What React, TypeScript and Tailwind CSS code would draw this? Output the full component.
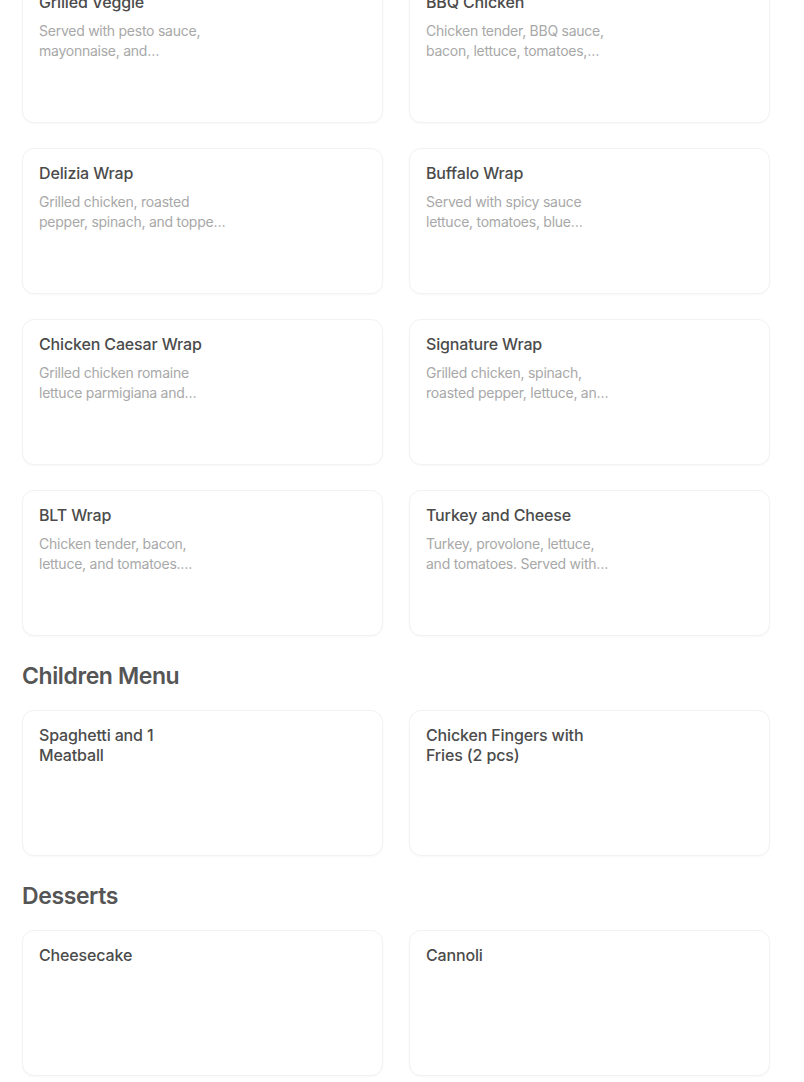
type Item = { name: string; desc?: string };

const wraps: Item[] = [
  { name: "Grilled Veggie", desc: "Served with pesto sauce, mayonnaise, and caramelized onions, lettuce and tomatoes." },
  { name: "BBQ Chicken", desc: "Chicken tender, BBQ sauce, bacon, lettuce, tomatoes, and cheddar cheese." },
  { name: "Delizia Wrap", desc: "Grilled chicken, roasted pepper, spinach, and topped with fresh mozzarella." },
  { name: "Buffalo Wrap", desc: "Served with spicy sauce lettuce, tomatoes, blue cheese dressing." },
  { name: "Chicken Caesar Wrap", desc: "Grilled chicken romaine lettuce parmigiana and caesar dressing." },
  { name: "Signature Wrap", desc: "Grilled chicken, spinach, roasted pepper, lettuce, and honey mustard." },
  { name: "BLT Wrap", desc: "Chicken tender, bacon, lettuce, and tomatoes. Served with mayonnaise." },
  { name: "Turkey and Cheese", desc: "Turkey, provolone, lettuce, and tomatoes. Served with mayonnaise." },
];

const children: Item[] = [
  { name: "Spaghetti and 1 Meatball" },
  { name: "Chicken Fingers with Fries (2 pcs)" },
];

const desserts: Item[] = [{ name: "Cheesecake" }, { name: "Cannoli" }];

const MenuCard = ({ item }: { item: Item }) => (
  <div className="h-[146px] rounded-xl border border-[#f2f2f2] bg-white pl-[16px] pr-[15px] pt-[14px] shadow-[0_1px_2px_rgba(0,0,0,0.03)]">
    <h3 className="w-[182px] text-[16px] leading-[20px] font-medium tracking-[-0.15px] text-[#4b4b4b]">
      {item.name}
    </h3>
    {item.desc && (
      <p className="mt-[9px] line-clamp-2 w-[187px] text-[14px] leading-[20px] tracking-[-0.25px] text-[#a8a8a8]">
        {item.desc}
      </p>
    )}
  </div>
);

const Grid = ({ items }: { items: Item[] }) => (
  <div className="grid grid-cols-2 gap-x-[26px] gap-y-[25px]">
    {items.map((item) => (
      <MenuCard key={item.name} item={item} />
    ))}
  </div>
);

const SectionTitle = ({ children }: { children: string }) => (
  <h2 className="mt-[24px] mb-[18px] text-[23px] leading-[32px] font-semibold tracking-[-0.4px] text-[#555555]">
    {children}
  </h2>
);

export default function App() {
  return (
    <div className="h-[1082px] overflow-hidden bg-white font-['Inter',sans-serif]">
      <div className="ml-[22px] w-[748px] -mt-[23px]">
        <Grid items={wraps} />

        <SectionTitle>Children Menu</SectionTitle>
        <Grid items={children} />

        <SectionTitle>Desserts</SectionTitle>
        <Grid items={desserts} />
      </div>
    </div>
  );
}
